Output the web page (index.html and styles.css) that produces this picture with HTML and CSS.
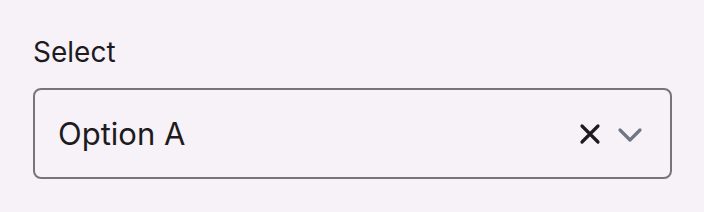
FILE: index.html
```html
<!DOCTYPE html>
<html lang="en">
<head>
  <meta charset="UTF-8" />
  <meta name="viewport" content="width=device-width, initial-scale=1.0"/>
  <title>Select</title>
  <link rel="stylesheet" href="styles.css">
</head>
<body>
  <div class="field">
    <label class="field-label" for="choice">Select</label>
    <div class="select" id="choice">
      <span class="select-value">Option A</span>
      <span class="select-icons">
        <svg class="icon-clear" width="22" height="22" viewBox="0 0 22 22">
          <path d="M3 3 L19 19 M19 3 L3 19" stroke="#1d1b20" stroke-width="3.2" stroke-linecap="round" fill="none"/>
        </svg>
        <svg class="icon-chevron" width="26" height="16" viewBox="0 0 26 16">
          <path d="M3 3 L13 13 L23 3" stroke="#6f7782" stroke-width="3.2" stroke-linecap="round" stroke-linejoin="round" fill="none"/>
        </svg>
      </span>
    </div>
  </div>
</body>
</html>
```

FILE: styles.css
```css
body {
  margin: 0;
  padding: 35px 32px 0 33px;
  background: #f6f2f8;
  font-family: Inter, "Noto Sans", sans-serif;
  color: #1d1b20;
}
.field {
  display: flex;
  flex-direction: column;
  gap: 19px;
}
.field-label {
  font-size: 28px;
  line-height: 34px;
}
.select {
  height: 91px;
  box-sizing: border-box;
  border: 2px solid #78737c;
  border-radius: 8px;
  display: flex;
  align-items: center;
  justify-content: space-between;
  padding: 0 27px 0 23px;
}
.select-value {
  font-size: 31px;
}
.select-icons {
  display: flex;
  align-items: center;
  gap: 16px;
}
.icon-chevron {
  margin-top: 2px;
}
```
